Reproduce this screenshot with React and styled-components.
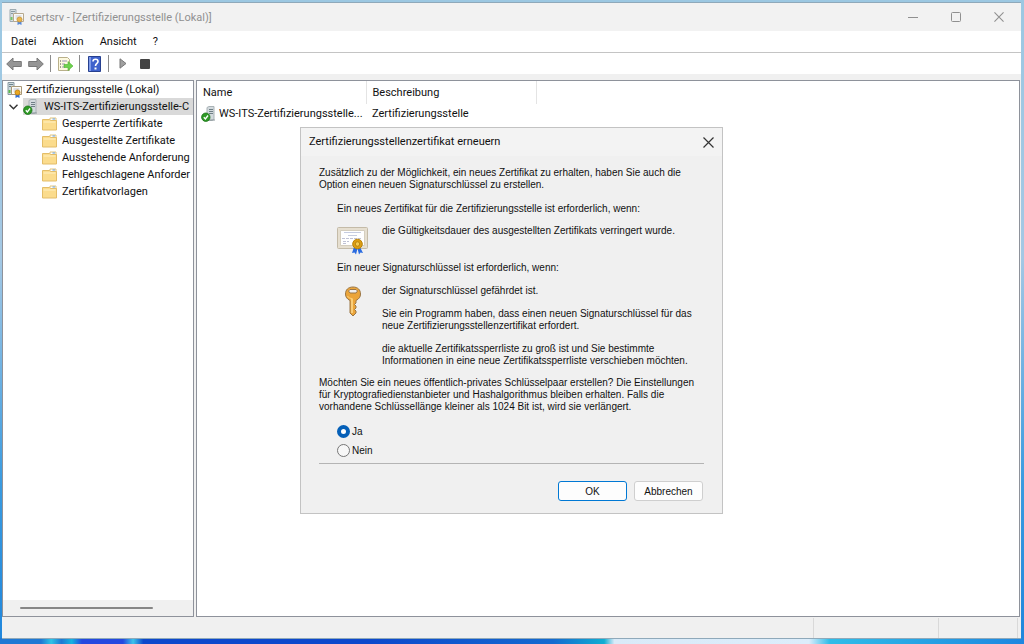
import React, { useState } from "react";
import styled, { createGlobalStyle } from "styled-components";

const uiFont = `Roboto, "Noto Sans", sans-serif`;
const dialogFont = `"Liberation Sans", Arial, sans-serif`;

const GlobalStyle = createGlobalStyle`
  * {
    box-sizing: border-box;
  }
  body {
    margin: 0;
    font-family: ${uiFont};
    font-size: 11px;
    color: #111;
  }
  svg {
    flex-shrink: 0;
  }
`;

const folders = [
  "Gesperrte Zertifikate",
  "Ausgestellte Zertifikate",
  "Ausstehende Anforderung",
  "Fehlgeschlagene Anforder",
  "Zertifikatvorlagen",
];

const ServerCertIcon = ({ dim }) => (
  <svg width="16" height="16" viewBox="0 0 16 16" opacity={dim ? 0.8 : 1}>
    <path d="M1 .5h6v12H1z" fill="#cfdbe0" stroke="#8a9aa2" />
    <path d="M2 2.500h4M2 4.500h2" stroke="#6f858f" />
    <path d="M1.500 8h2v3h-2z" fill="#58b947" />
    <path d="M4.500 4.500h10v8h-10z" fill="#fdfcf6" stroke="#a89878" />
    <path d="M6.500 7h6M6.500 9h2" stroke="#b4bdd4" />
    <path d="M8.500 12v4l2-1 2 1v-4z" fill="#2f6fd6" />
    <circle cx="10.500" cy="10.500" r="2.500" fill="#e9a820" stroke="#c4861a" />
  </svg>
);

const ServerOkIcon = () => (
  <svg width="16" height="16" viewBox="0 0 16 16">
    <path d="M6 1.500l2-1h5v13l-2 1H6z" fill="#d3dade" stroke="#a9b2b6" />
    <path d="M8 3.500h4M8 5.500h4M8 7.500h4" stroke="#6f7f86" />
    <path d="M6 14h8" stroke="#8d979b" />
    <circle cx="4.800" cy="11.200" r="4.200" fill="#2f9a26" stroke="#1b7418" strokeWidth=".8" />
    <path d="M2.800 11.200l1.600 1.800L7 9.500" fill="none" stroke="#fff" strokeWidth="1.300" />
  </svg>
);

const FolderIcon = () => (
  <svg width="15" height="14" viewBox="0 0 15 14">
    <path d="M8 1h6v4H8z" fill="#fff" stroke="#e0c47c" />
    <path d="M10.500 2h2.500" stroke="#5c9be0" />
    <path d="M.5 2.500h7l1 1h6v9.500H.5z" fill="#fbdc8d" stroke="#e3bd68" />
    <path d="M1.500 5h12" stroke="#fff0c2" />
  </svg>
);

const ArrowIcon = ({ right }) => (
  <svg width="16" height="14" viewBox="0 0 16 14">
    <path
      d={
        right
          ? "M15.300 7L9 1v3.500H.7v5H9V13z"
          : "M.7 7L7 1v3.500h8.300v5H7V13z"
      }
      fill="#959595"
      stroke="#787878"
    />
  </svg>
);

const ExportIcon = () => (
  <svg width="16" height="16" viewBox="0 0 16 16">
    <path d="M1.500 1.500h9l2 2v11h-11z" fill="#fdf9df" stroke="#b9b08a" />
    <path d="M3 5h1M3 8h1M3 11h1" stroke="#444" />
    <path d="M5 5h5M5 8h3M5 11h3" stroke="#9a94b8" />
    <path d="M7 8.500h4v-3l5 4.500-5 4.500v-3H7z" fill="#6fd24e" stroke="#4bb033" strokeWidth=".6" />
  </svg>
);

const HelpIcon = () => (
  <svg width="13" height="16" viewBox="0 0 13 16">
    <path d="M.5.5h12v15H.5z" fill="#3f62cc" stroke="#27408f" />
    <path d="M1 1h2v14H1z" fill="#7f9bea" />
    <path
      d="M5 5.500c0-3 5-3 5 0 0 2-2.500 2-2.500 4.500"
      fill="none"
      stroke="#fff"
      strokeWidth="1.600"
    />
    <path d="M6.500 11.500h2v2h-2z" fill="#fff" />
  </svg>
);

const CertificateIcon = () => (
  <svg width="32" height="28" viewBox="0 0 32 28">
    <rect x=".5" y=".5" width="30" height="21" rx="1" fill="#e6dfd0" stroke="#c4bba8" />
    <path d="M3.500 3.500h24v15h-24z" fill="#fff" stroke="#d5cebf" />
    <path d="M7 5.500h17M11 8.500h9" stroke="#c6cce0" />
    <path d="M5 11.500h20M6 14.500h6M6 16.500h4" stroke="#c0c2d4" strokeDasharray="3 1" />
    <path d="M17 20l-2 6 2.500-.5 1.500 2 1.500-6zM23 20l3 6-2.500-.5-1.500 2-1.500-6z" fill="#2a6be0" />
    <circle cx="20.500" cy="17" r="4.800" fill="#dc9d12" stroke="#b98309" />
    <circle cx="20.500" cy="17" r="2.200" fill="#f5cb50" stroke="#a87406" strokeWidth=".7" />
  </svg>
);

const KeyIcon = () => (
  <svg width="18" height="31" viewBox="0 0 18 31">
    <path
      d="M9 1C4 1 1.500 4 1.500 8c0 3 1.500 5 4.500 6.500V27l3 3 3-3v-2l-1.500-1.500L12 22v-2l-1.500-1.500L12 17v-2.500c3-1.500 4.500-3.500 4.500-6.500 0-4-2.500-7-7.500-7zM6 3.500h6l1.500 1.500-1.500 2H6L4.500 5z"
      fill="#eba53a"
      fillRule="evenodd"
      stroke="#9a7646"
    />
    <path d="M8 13v14" stroke="#ffdc90" strokeWidth="1.500" />
    <path d="M3.500 10c1 2 3 2.500 5 2.500" fill="none" stroke="#ffd27a" />
  </svg>
);

const CloseIcon = ({ size = 11 }) => (
  <svg width={size} height={size} viewBox="0 0 11 11">
    <path d="M.5.5l10 10M10.500.5l-10 10" stroke="currentColor" strokeWidth="1.200" />
  </svg>
);

const Desktop = styled.div`
  display: flex;
  min-height: 100vh;
  padding: 2px 3px 5px 2px;
  background:
    linear-gradient(
        90deg,
        #1f78d4 0%,
        #1f78d4 4%,
        #2ec4e6 5%,
        #1f78d4 6%,
        #16b4e0 7%,
        #2448e0 8%,
        #2448e0 12%,
        #3cc4ea 13%,
        #0d48cc 14%,
        #0d48cc 36%,
        #146ad0 54%,
        #10aed2 59%,
        #d9eaf8 60%,
        #dcedfb 79%,
        #30bde8 81%,
        #1e86e0 100%
      )
      bottom / 100% 6px no-repeat,
    linear-gradient(#9cc8e2, #a4c8e4 40%, #3a9be0 75%, #1f86dc);
`;

const Window = styled.main`
  position: relative;
  display: flex;
  flex: 1;
  flex-direction: column;
  min-width: 0;
  background: #f0f0f0;
  border-top: 1px solid #8fa9ba;
  border-bottom: 1px solid #8fa9ba;
`;

const TitleBar = styled.header`
  display: flex;
  align-items: center;
  height: 28px;
  padding: 0 1px 0 7px;
  background: #f2f2f2;
  color: #909090;
`;

const Title = styled.h1`
  flex: 1;
  margin: 0 0 0 5px;
  font-size: 11px;
  font-weight: 400;
`;

const WindowButton = styled.button`
  display: flex;
  align-items: center;
  justify-content: center;
  width: 43px;
  height: 28px;
  padding: 0;
  border: 0;
  background: none;
  color: #909090;
`;

const MenuBar = styled.nav`
  display: flex;
  align-items: center;
  height: 22px;
  padding-left: 9px;
  gap: 16px;
  background: #fff;
  border-bottom: 1px solid #c4c4c4;
`;

const MenuButton = styled.button`
  padding: 0;
  border: 0;
  background: none;
  color: #111;
  font-family: inherit;
  font-size: 11px;
  line-height: 16px;
`;

const ToolBar = styled.div`
  display: flex;
  align-items: center;
  height: 21px;
  padding-left: 1px;
  background: #fff;
`;

const ToolButton = styled.button`
  display: flex;
  align-items: center;
  justify-content: center;
  width: 22px;
  height: 20px;
  padding: 0;
  border: 0;
  background: none;
`;

const Divider = styled.span`
  width: 1px;
  height: 17px;
  margin: 0 3px;
  background: #8c8c8c;
`;

const Panes = styled.div`
  display: grid;
  grid-template-columns: 192px minmax(0, 1fr);
  flex: 1;
  gap: 2px;
  padding: 6px 1px 0 0;
`;

const Pane = styled.section`
  display: flex;
  flex-direction: column;
  min-width: 0;
  background: #fff;
  border: 1px solid #8e929b;
`;

const Tree = styled.ul`
  flex: 1;
  margin: 0;
  padding: 0;
  list-style: none;
  overflow: hidden;
`;

const TreeRow = styled.li`
  display: flex;
  align-items: center;
  height: 17px;
  padding-left: ${({ $indent }) => $indent}px;
  gap: ${({ $gap = 5 }) => $gap}px;
  white-space: nowrap;
`;

const TreeNode = styled.span`
  display: flex;
  align-items: center;
  flex: 1;
  height: 17px;
  gap: 5px;
  background: #d9d9d9;
`;

const ScrollTrack = styled.div`
  display: flex;
  align-items: center;
  height: 16px;
  padding: 0 40px 0 17px;
  background: #f0f0f0;
`;

const ScrollThumb = styled.div`
  flex: 1;
  height: 2px;
  border-radius: 1px;
  background: #868686;
`;

const List = styled.table`
  width: 339px;
  table-layout: fixed;
  border-collapse: collapse;
  font-size: 11px;
  text-align: left;

  th {
    height: 23px;
    padding: 0 6px;
    border-right: 1px solid #e4e4e4;
    font-weight: 400;
  }

  td {
    height: 19px;
    padding: 0 0 0 6px;
  }
`;

const NameCell = styled.div`
  display: flex;
  align-items: center;
  gap: 2px;
  margin-left: -2px;
  white-space: nowrap;
`;

const StatusBar = styled.footer`
  display: grid;
  grid-template-columns: 1fr 125px 79px 3px;
  height: 21px;

  span {
    margin-top: 1px;
    border-right: 1px solid #d9d9d9;
  }
`;

const Dialog = styled.div`
  position: absolute;
  top: 124px;
  left: 298px;
  width: 423px;
  background: #f0f0f0;
  border: 1px solid #c3c3c3;
  color: #111;
  font-family: ${dialogFont};
  font-size: 10px;
  line-height: 12px;
`;

const DialogHeader = styled.div`
  display: flex;
  align-items: center;
  justify-content: space-between;
  height: 28px;
  padding: 0 8px;
  background: #f3f3f3;
  font-family: ${uiFont};
`;

const DialogTitle = styled.h2`
  margin: 0;
  font-size: 11px;
  font-weight: 400;
`;

const DialogClose = styled.button`
  display: flex;
  padding: 0;
  border: 0;
  background: none;
  color: #333;
`;

const DialogBody = styled.form`
  padding: 11px 18px 12px;

  p {
    margin: 0;
    white-space: nowrap;
  }
`;

const Reason = styled.p`
  && {
    margin: ${({ $top }) => $top}px 0 0 18px;
  }
`;

const IconRow = styled.div`
  display: grid;
  grid-template-columns: 45px 1fr;
  padding-left: 18px;
  margin-top: ${({ $top }) => $top}px;
`;

const IconBox = styled.div`
  padding: ${({ $pad }) => $pad};
  height: 28px;
`;

const Stack = styled.div`
  display: flex;
  flex-direction: column;
  gap: 11px;
`;

const Question = styled.p`
  && {
    margin-top: 10px;
  }
`;

const Options = styled.fieldset`
  display: flex;
  flex-direction: column;
  gap: 6px;
  margin: 12px 0 0;
  padding: 0 0 6px 18px;
  border: 0;
  border-bottom: 1px solid #b4b4b4;
`;

const Option = styled.label`
  display: flex;
  align-items: center;
  gap: 2px;
  height: 13px;
`;

const Radio = styled.input`
  appearance: none;
  width: 13px;
  height: 13px;
  margin: 0;
  border: 1px solid #767676;
  border-radius: 50%;
  background: #f7f7f7;

  &:checked {
    border: 4px solid #0560b8;
    background: #fff;
  }
`;

const Actions = styled.div`
  display: flex;
  justify-content: flex-end;
  gap: 7px;
  padding: 17px 1px 0 0;
`;

const ActionButton = styled.button`
  width: 69px;
  height: 20px;
  padding: 0;
  border: 1px solid ${({ $primary }) => ($primary ? "#0078d4" : "#cfcfcf")};
  border-radius: 3px;
  background: #fdfdfd;
  color: #111;
  font-family: inherit;
  font-size: 10px;
`;

const RenewDialog = ({ onClose }) => {
  const [newKey, setNewKey] = useState("ja");

  return (
    <Dialog role="dialog" aria-labelledby="renew-title">
      <DialogHeader>
        <DialogTitle id="renew-title">
          Zertifizierungsstellenzertifikat erneuern
        </DialogTitle>
        <DialogClose type="button" aria-label="Schließen" onClick={onClose}>
          <CloseIcon />
        </DialogClose>
      </DialogHeader>
      <DialogBody onSubmit={(e) => e.preventDefault()}>
        <p>
          Zusätzlich zu der Möglichkeit, ein neues Zertifikat zu erhalten, haben Sie auch die
          <br />
          Option einen neuen Signaturschlüssel zu erstellen.
        </p>
        <Reason $top={12}>
          Ein neues Zertifikat für die Zertifizierungsstelle ist erforderlich, wenn:
        </Reason>
        <IconRow $top={10}>
          <IconBox $pad="2px 0 0">
            <CertificateIcon />
          </IconBox>
          <p>die Gültigkeitsdauer des ausgestellten Zertifikats verringert wurde.</p>
        </IconRow>
        <Reason $top={9}>
          Ein neuer Signaturschlüssel ist erforderlich, wenn:
        </Reason>
        <IconRow $top={11}>
          <IconBox $pad="1px 0 0 7px">
            <KeyIcon />
          </IconBox>
          <Stack>
            <p>der Signaturschlüssel gefährdet ist.</p>
            <p>
              Sie ein Programm haben, dass einen neuen Signaturschlüssel für das
              <br />
              neue Zertifizierungsstellenzertifikat erfordert.
            </p>
            <p>
              die aktuelle Zertifikatssperrliste zu groß ist und Sie bestimmte
              <br />
              Informationen in eine neue Zertifikatssperrliste verschieben möchten.
            </p>
          </Stack>
        </IconRow>
        <Question>
          Möchten Sie ein neues öffentlich-privates Schlüsselpaar erstellen? Die Einstellungen
          <br />
          für Kryptografiedienstanbieter und Hashalgorithmus bleiben erhalten. Falls die
          <br />
          vorhandene Schlüssellänge kleiner als 1024 Bit ist, wird sie verlängert.
        </Question>
        <Options>
          <Option>
            <Radio
              type="radio"
              name="newKey"
              checked={newKey === "ja"}
              onChange={() => setNewKey("ja")}
            />
            Ja
          </Option>
          <Option>
            <Radio
              type="radio"
              name="newKey"
              checked={newKey === "nein"}
              onChange={() => setNewKey("nein")}
            />
            Nein
          </Option>
        </Options>
        <Actions>
          <ActionButton $primary type="submit">
            OK
          </ActionButton>
          <ActionButton type="button" onClick={onClose}>
            Abbrechen
          </ActionButton>
        </Actions>
      </DialogBody>
    </Dialog>
  );
};

const App = () => {
  const [open, setOpen] = useState(true);

  return (
    <>
      <GlobalStyle />
      <Desktop>
        <Window>
          <TitleBar>
            <ServerCertIcon dim />
            <Title>certsrv - [Zertifizierungsstelle (Lokal)]</Title>
            <WindowButton aria-label="Minimieren">
              <svg width="10" height="10" viewBox="0 0 10 10">
                <path d="M0 5.500h10" stroke="currentColor" />
              </svg>
            </WindowButton>
            <WindowButton aria-label="Maximieren">
              <svg width="10" height="10" viewBox="0 0 10 10">
                <rect x=".5" y=".5" width="9" height="9" rx="1" fill="none" stroke="currentColor" />
              </svg>
            </WindowButton>
            <WindowButton aria-label="Schließen">
              <CloseIcon size={10} />
            </WindowButton>
          </TitleBar>
          <MenuBar>
            <MenuButton>Datei</MenuButton>
            <MenuButton>Aktion</MenuButton>
            <MenuButton>Ansicht</MenuButton>
            <MenuButton>?</MenuButton>
          </MenuBar>
          <ToolBar>
            <ToolButton aria-label="Zurück">
              <ArrowIcon />
            </ToolButton>
            <ToolButton aria-label="Vorwärts">
              <ArrowIcon right />
            </ToolButton>
            <Divider />
            <ToolButton aria-label="Liste exportieren">
              <ExportIcon />
            </ToolButton>
            <Divider />
            <ToolButton aria-label="Hilfe">
              <HelpIcon />
            </ToolButton>
            <Divider />
            <ToolButton aria-label="Starten">
              <svg width="8" height="11" viewBox="0 0 8 11">
                <path d="M1 .8l6 4.700-6 4.700z" fill="#a0a0a0" stroke="#777" />
              </svg>
            </ToolButton>
            <ToolButton aria-label="Beenden">
              <svg width="10" height="10" viewBox="0 0 10 10">
                <rect width="10" height="10" rx="1" fill="#444" />
              </svg>
            </ToolButton>
          </ToolBar>
          <Panes>
            <Pane>
              <Tree>
                <TreeRow $indent={4} $gap={3}>
                  <ServerCertIcon />
                  Zertifizierungsstelle (Lokal)
                </TreeRow>
                <TreeRow $indent={6}>
                  <svg width="9" height="6" viewBox="0 0 9 6">
                    <path d="M.5.8l4 4 4-4" fill="none" stroke="#333" strokeWidth="1.400" />
                  </svg>
                  <TreeNode>
                    <ServerOkIcon />
                    WS-ITS-Zertifizierungsstelle-C
                  </TreeNode>
                </TreeRow>
                {folders.map((name) => (
                  <TreeRow key={name} $indent={39}>
                    <FolderIcon />
                    {name}
                  </TreeRow>
                ))}
              </Tree>
              <ScrollTrack>
                <ScrollThumb />
              </ScrollTrack>
            </Pane>
            <Pane>
              <List>
                <colgroup>
                  <col width="169" />
                  <col width="170" />
                </colgroup>
                <thead>
                  <tr>
                    <th>Name</th>
                    <th>Beschreibung</th>
                  </tr>
                </thead>
                <tbody>
                  <tr>
                    <td>
                      <NameCell>
                        <ServerOkIcon />
                        WS-ITS-Zertifizierungsstelle...
                      </NameCell>
                    </td>
                    <td>Zertifizierungsstelle</td>
                  </tr>
                </tbody>
              </List>
            </Pane>
          </Panes>
          <StatusBar>
            <span />
            <span />
            <span />
          </StatusBar>
          {open && <RenewDialog onClose={() => setOpen(false)} />}
        </Window>
      </Desktop>
    </>
  );
};

export default App;
